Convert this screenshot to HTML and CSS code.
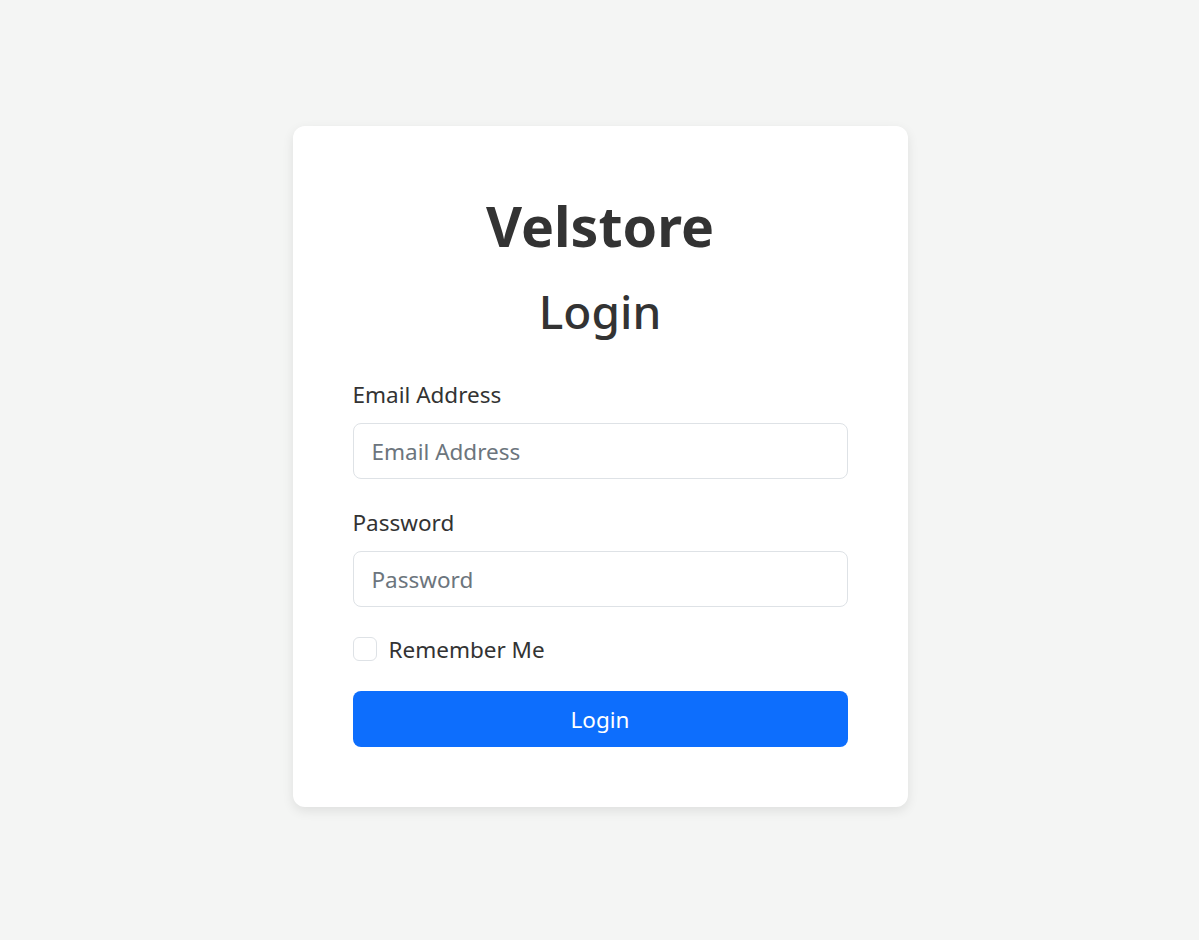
FILE: index.html
```html
<!DOCTYPE html>
<html lang="en">
<head>
<meta charset="utf-8">
<title>Velstore - Login</title>
<link rel="stylesheet" href="styles.css">
</head>
<body>
<main class="page">
  <div class="card">
    <h1 class="brand">Velstore</h1>
    <h2 class="title">Login</h2>
    <form class="form">
      <div class="field">
        <label class="label" for="email">Email Address</label>
        <input class="input" id="email" type="email" placeholder="Email Address">
      </div>
      <div class="field">
        <label class="label" for="password">Password</label>
        <input class="input" id="password" type="password" placeholder="Password">
      </div>
      <label class="check">
        <input class="check-box" type="checkbox">
        <span class="check-label">Remember Me</span>
      </label>
      <button class="btn" type="button">Login</button>
    </form>
  </div>
</main>
</body>
</html>
```

FILE: styles.css
```css
* { box-sizing: border-box; }
html, body { margin: 0; padding: 0; }
body {
  background: #f4f5f4;
  font-family: "Noto Sans", "Open Sans", sans-serif;
  color: #333333;
}
.page {
  display: flex;
  justify-content: center;
  align-items: flex-start;
  padding-top: 126px;
  padding-left: 1px;
  min-height: 940px;
}
.card {
  width: 615px;
  background: #ffffff;
  border-radius: 12px;
  box-shadow: 0 4px 12px rgba(0, 0, 0, 0.09);
  padding: 60px;
  display: flex;
  flex-direction: column;
}
.brand {
  margin: 0;
  text-align: center;
  font-size: 55.5px;
  line-height: 80px;
  font-weight: 700;
  color: #333333;
}
.title {
  margin: 10px 0 0;
  text-align: center;
  font-size: 46px;
  line-height: 70px;
  font-weight: 500;
  color: #333333;
}
.form {
  margin-top: 33px;
  display: flex;
  flex-direction: column;
}
.field {
  display: flex;
  flex-direction: column;
  margin-bottom: 28px;
}
.label {
  font-size: 22.5px;
  line-height: 32px;
  margin-bottom: 12px;
  color: #333333;
}
.input {
  height: 56px;
  border: 1px solid #dee2e6;
  border-radius: 8px;
  padding: 0 18px;
  font-family: inherit;
  font-size: 22.5px;
  color: #333333;
  background: #fff;
  outline: none;
}
.input::placeholder { color: #6c757d; }
.check {
  display: flex;
  align-items: center;
  gap: 12px;
  margin-top: 2px;
  height: 24px;
}
.check-box {
  appearance: none;
  -webkit-appearance: none;
  width: 24px;
  height: 24px;
  margin: 0;
  border: 1px solid #dee2e6;
  border-radius: 6px;
  background: #fff;
}
.check-label {
  font-size: 22.5px;
  color: #333333;
}
.btn {
  margin-top: 30px;
  height: 56px;
  border: none;
  border-radius: 8px;
  background: #0d6efd;
  color: #ffffff;
  font-family: inherit;
  font-size: 22.5px;
}
```
